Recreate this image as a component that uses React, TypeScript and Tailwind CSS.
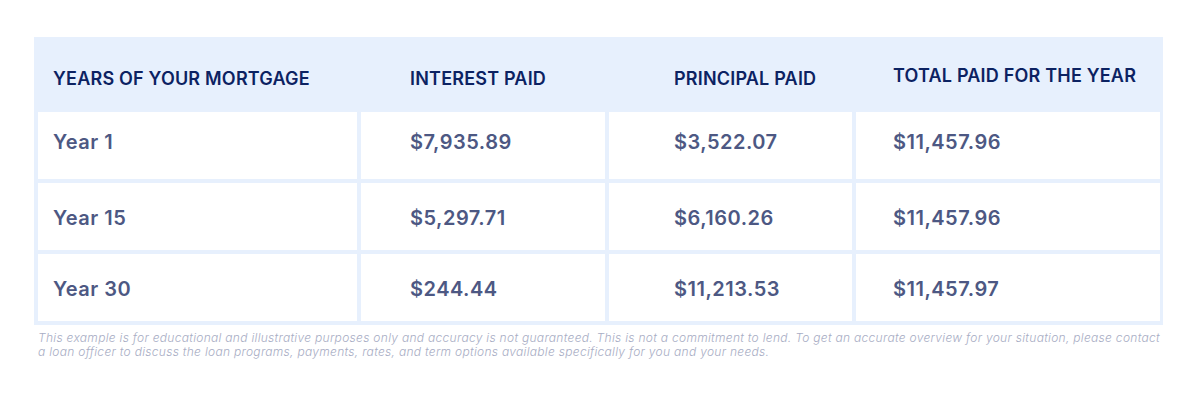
import React from "react";

const rows = [
  ["Year 1", "$7,935.89", "$3,522.07", "$11,457.96"],
  ["Year 15", "$5,297.71", "$6,160.26", "$11,457.96"],
  ["Year 30", "$244.44", "$11,213.53", "$11,457.97"],
];

const pads = ["pl-[15px]", "pl-[49px]", "pl-[65px]", "pl-[37px]"];

export default function App() {
  return (
    <div className="w-[1200px] h-[404px] bg-white pt-[37px] pl-[34px]" style={{ fontFamily: "Inter, 'Open Sans', sans-serif" }}>
      <div className="w-[1129px] bg-[#e7f0fd] p-1 grid grid-cols-[319px_244px_243px_304px] gap-1">
        {["YEARS OF YOUR MORTGAGE", "INTEREST PAID", "PRINCIPAL PAID", "TOTAL PAID FOR THE YEAR"].map((h, i) => (
          <div
            key={h}
            className={`h-[67px] flex items-center ${pads[i]} ${i === 3 ? "pt-[1px]" : "pt-[7px]"} text-[18px] font-semibold text-[#0c2262] tracking-[0.2px]`}
          >
            {h}
          </div>
        ))}
        {rows.map((r, ri) =>
          r.map((c, i) => (
            <div
              key={r[0] + i}
              className={`h-[67px] bg-white flex items-center ${pads[i]} ${ri === 0 ? "pb-[7px]" : "pt-[3px]"} text-[20px] font-semibold text-[#4d5883] tracking-[0.5px]`}
            >
              {c}
            </div>
          ))
        )}
      </div>
      <p className="w-[1132px] mt-[6px] ml-[4px] text-[12px] leading-[14px] italic font-light text-[#a8adc4] tracking-[0.3px] whitespace-nowrap">
        This example is for educational and illustrative purposes only and accuracy is not guaranteed. This is not a commitment to lend. To get an accurate overview for your situation, please contact
        <br />
        a loan officer to discuss the loan programs, payments, rates, and term options available specifically for you and your needs.
      </p>
    </div>
  );
}
